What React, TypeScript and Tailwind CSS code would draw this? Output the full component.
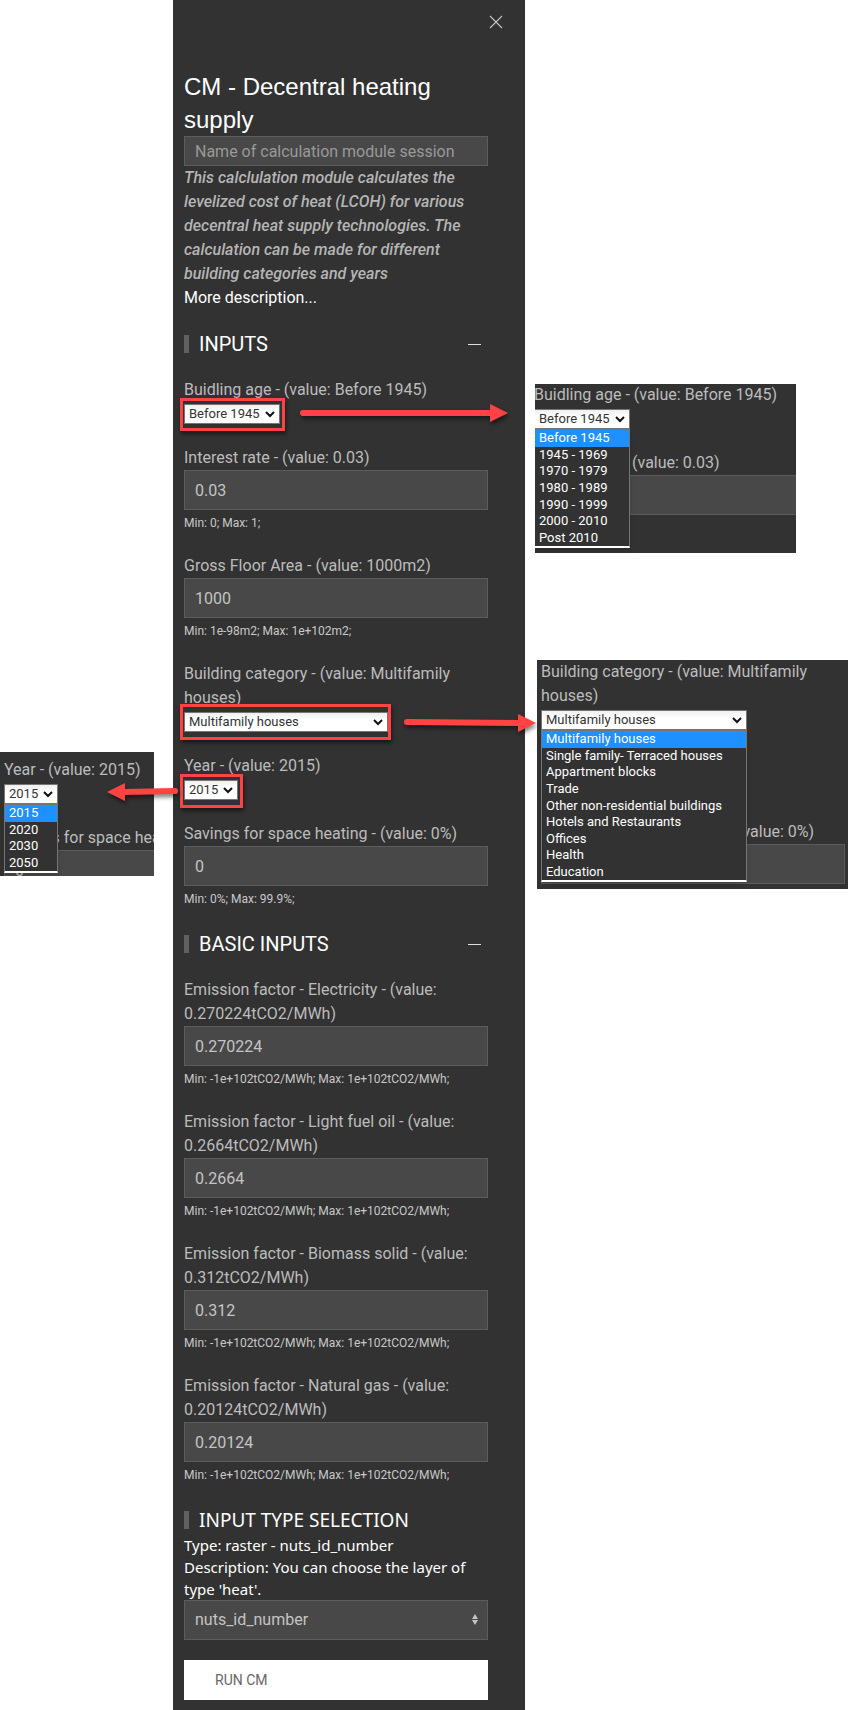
import React, { useId } from "react";
import clsx from "clsx";

const AGES = ["Before 1945", "1945 - 1969", "1970 - 1979", "1980 - 1989", "1990 - 1999", "2000 - 2010", "Post 2010"];
const CATEGORIES = [
  "Multifamily houses",
  "Single family- Terraced houses",
  "Appartment blocks",
  "Trade",
  "Other non-residential buildings",
  "Hotels and Restaurants",
  "Offices",
  "Health",
  "Education",
];
const YEARS = ["2015", "2020", "2030", "2050"];

const EMISSIONS = [
  { name: "Electricity", value: "0.270224" },
  { name: "Light fuel oil", value: "0.2664" },
  { name: "Biomass solid", value: "0.312" },
  { name: "Natural gas", value: "0.20124" },
];

function NumberField({ label, value, hint }: { label: string; value: string; hint?: string }) {
  const id = useId();
  return (
    <div>
      <label htmlFor={id} className="block">
        {label}
      </label>
      <input
        id={id}
        defaultValue={value}
        className="block h-10 w-full border border-[#5c5c5c] bg-[#484848] px-2.5 text-[#c4c4c4] outline-none"
      />
      {hint && <p className="pt-0.5 text-xs leading-[22px] text-[#c8c8c8]">{hint}</p>}
    </div>
  );
}

type SelectFieldProps = {
  label: string;
  options: string[];
  width: string;
  open?: boolean;
  menuHeight?: string;
  children?: React.ReactNode;
};

function SelectField({ label, options, width, open, menuHeight, children }: SelectFieldProps) {
  const id = useId();
  return (
    <div>
      <label htmlFor={id} className="block">
        {label}
      </label>
      <div className={clsx("relative my-0.5 h-5", width)}>
        <select
          id={id}
          defaultValue={options[0]}
          className="block h-5 w-full appearance-none border border-[#767676] bg-linear-to-b from-[#f0f0f0] to-white to-40% pl-1 text-[13px] leading-4 text-[#333333] outline-none"
        >
          {options.map((o) => (
            <option key={o}>{o}</option>
          ))}
        </select>
        <svg
          className="pointer-events-none absolute top-[7px] right-[5px] h-[7px] w-[10px]"
          viewBox="0 0 10 7"
          fill="none"
          stroke="#111"
          strokeWidth="2"
        >
          <path d="M1 1 L5 5 L9 1" />
        </svg>
        {open && (
          <ul
            role="listbox"
            aria-label={label}
            className={clsx(
              "absolute top-5 left-0 z-10 flex w-full flex-col border border-[#767676] border-b-2 border-b-white bg-[#323232] text-[13px] leading-4 text-white shadow-md",
              menuHeight,
            )}
          >
            {options.map((o, i) => (
              <li
                key={o}
                role="option"
                aria-selected={i === 0}
                className={clsx("flex flex-1 items-center pl-1 whitespace-nowrap", i === 0 && "bg-[#1e90ff]")}
              >
                {o}
              </li>
            ))}
          </ul>
        )}
        {children}
      </div>
    </div>
  );
}

function Highlight({ className }: { className: string }) {
  return (
    <span
      className={clsx(
        "pointer-events-none absolute -left-1 border-3 border-[#ff4343] shadow-[1px_3px_4px_rgba(0,0,0,0.5)]",
        className,
      )}
    />
  );
}

function Arrow({ className, width, line, head }: { className: string; width: number; line: string; head: string }) {
  return (
    <svg
      className={clsx("pointer-events-none absolute top-0 overflow-visible drop-shadow-[1px_3px_2px_rgba(0,0,0,0.5)]", className)}
      width={width}
      height="20"
      viewBox={`0 0 ${width} 20`}
    >
      <path d={line} stroke="#ff4343" strokeWidth="6" strokeLinecap="round" fill="none" />
      <path d={head} fill="#ff4343" />
    </svg>
  );
}

function SectionTitle({
  children,
  collapsible,
  size = "text-xl",
}: {
  children: React.ReactNode;
  collapsible?: boolean;
  size?: string;
}) {
  return (
    <div className="flex h-7 items-center pr-[7px] text-white">
      <span className="mr-2.5 h-[18px] w-[5px] bg-[#606060]" />
      <h2 className={clsx("flex-1", size)}>{children}</h2>
      {collapsible && (
        <button type="button" aria-label="Collapse section" className="flex h-5 w-[13px] items-center">
          <span className="h-px w-full bg-[#dddddd]" />
        </button>
      )}
    </div>
  );
}

export default function App() {
  return (
    <main className="grid min-h-screen grid-cols-[173fr_352fr_323fr] items-start bg-white font-[Roboto,sans-serif] text-base leading-6 text-[#bcbcbc]">
      <aside className="pt-[752px]">
        <section className="h-31 w-[154px] overflow-hidden bg-[#323232] pt-1.5 pl-1">
          <div className="flex w-76 flex-col gap-5">
            <SelectField label="Year - (value: 2015)" options={YEARS} width="w-[54px]" open menuHeight="h-[69px]" />
            <NumberField label="Savings for space heating - (value: 0%)" value="0" />
          </div>
        </section>
      </aside>

      <section className="relative z-10 min-h-screen bg-[#323232] pb-2.5">
        <header className="flex h-[70px] items-start justify-end pt-[15px] pr-[22px]">
          <button type="button" aria-label="Close">
            <svg width="14" height="14" viewBox="0 0 14 14" fill="none" stroke="#c4c4c4" strokeWidth="1.1">
              <path d="M1 1 L13 13 M13 1 L1 13" />
            </svg>
          </button>
        </header>

        <form className="flex flex-col gap-5 pr-[37px] pl-[11px]">
          <div>
            <h1 className="font-['Liberation_Sans',Arial,sans-serif] text-2xl leading-[33px] text-white">
              CM - Decentral heating supply
            </h1>
            <input
              aria-label="Name of calculation module session"
              placeholder="Name of calculation module session"
              className="block h-[30px] w-full border border-[#5c5c5c] bg-[#484848] px-2.5 outline-none placeholder:text-[#999999]"
            />
            <p className="font-medium text-[#b5b5b5] italic">
              This calclulation module calculates the levelized cost of heat (LCOH) for various decentral heat supply
              technologies. The calculation can be made for different building categories and years
            </p>
            <a href="#description" className="block text-white">
              More description...
            </a>
          </div>

          <SectionTitle collapsible>INPUTS</SectionTitle>
          <SelectField label="Buidling age - (value: Before 1945)" options={AGES} width="w-24">
            <Highlight className="-top-1.5 -right-[5px] -bottom-[7px]" />
            <Arrow className="left-28" width={212} line="M7 9 H196" head="M194 0 L212 9 L194 18 Z" />
          </SelectField>
          <NumberField label="Interest rate - (value: 0.03)" value="0.03" hint="Min: 0; Max: 1;" />
          <NumberField label="Gross Floor Area - (value: 1000m2)" value="1000" hint="Min: 1e-98m2; Max: 1e+102m2;" />
          <SelectField label="Building category - (value: Multifamily houses)" options={CATEGORIES} width="w-[204px]">
            <Highlight className="-top-2 -right-[3px] -bottom-2" />
            <Arrow className="left-54" width={136} line="M7 10 L120 11" head="M118 2 L136 11 L118 20 Z" />
          </SelectField>
          <SelectField label="Year - (value: 2015)" options={YEARS} width="w-[54px]">
            <Highlight className="-top-1.5 -right-[5px] -bottom-2" />
            <Arrow className="-left-20" width={74} line="M71 11 L20 12" head="M21 3 L3 12 L21 21 Z" />
          </SelectField>
          <NumberField label="Savings for space heating - (value: 0%)" value="0" hint="Min: 0%; Max: 99.9%;" />

          <SectionTitle collapsible>BASIC INPUTS</SectionTitle>
          {EMISSIONS.map((e) => (
            <NumberField
              key={e.name}
              label={`Emission factor - ${e.name} - (value: ${e.value}tCO2/MWh)`}
              value={e.value}
              hint="Min: -1e+102tCO2/MWh; Max: 1e+102tCO2/MWh;"
            />
          ))}

          <div className="font-['Noto_Sans',sans-serif] text-white">
            <SectionTitle size="text-[19px]">INPUT TYPE SELECTION</SectionTitle>
            <p className="text-[15px] leading-[22px]">Type: raster - nuts_id_number</p>
            <label htmlFor="layer" className="block text-[15px] leading-[22px]">
              Description: You can choose the layer of type 'heat'.
            </label>
            <div className="relative font-[Roboto,sans-serif]">
              <select
                id="layer"
                className="block h-10 w-full appearance-none border border-[#5c5c5c] bg-[#484848] px-2.5 text-[#c4c4c4] outline-none"
              >
                <option>nuts_id_number</option>
              </select>
              <svg
                className="pointer-events-none absolute top-3.5 right-2.5"
                width="6"
                height="11"
                viewBox="0 0 6 11"
                fill="#c4c4c4"
              >
                <path d="M0 5 L3 0 L6 5 Z M0 6 H6 L3 11 Z" />
              </svg>
            </div>
          </div>

          <button type="button" className="h-10 bg-white pl-[31px] text-left text-sm text-[#666666]">
            RUN CM
          </button>
        </form>
      </section>

      <aside className="pt-96">
        <section className="ml-2.5 h-[169px] w-[261px] overflow-hidden bg-[#323232]">
          <div className="-mt-px -ml-px flex w-76 flex-col gap-5">
            <SelectField
              label="Buidling age - (value: Before 1945)"
              options={AGES}
              width="w-24"
              open
              menuHeight="h-[119px]"
            />
            <NumberField label="Interest rate - (value: 0.03)" value="" />
          </div>
        </section>
        <section className="mt-[107px] ml-3 h-[229px] overflow-hidden bg-[#323232] pl-1">
          <div className="flex w-76 flex-col gap-22">
            <SelectField
              label="Building category - (value: Multifamily houses)"
              options={CATEGORIES}
              width="w-[206px]"
              open
              menuHeight="h-[152px]"
            />
            <NumberField label="Savings for space heating - (value: 0%)" value="" />
          </div>
        </section>
      </aside>
    </main>
  );
}
